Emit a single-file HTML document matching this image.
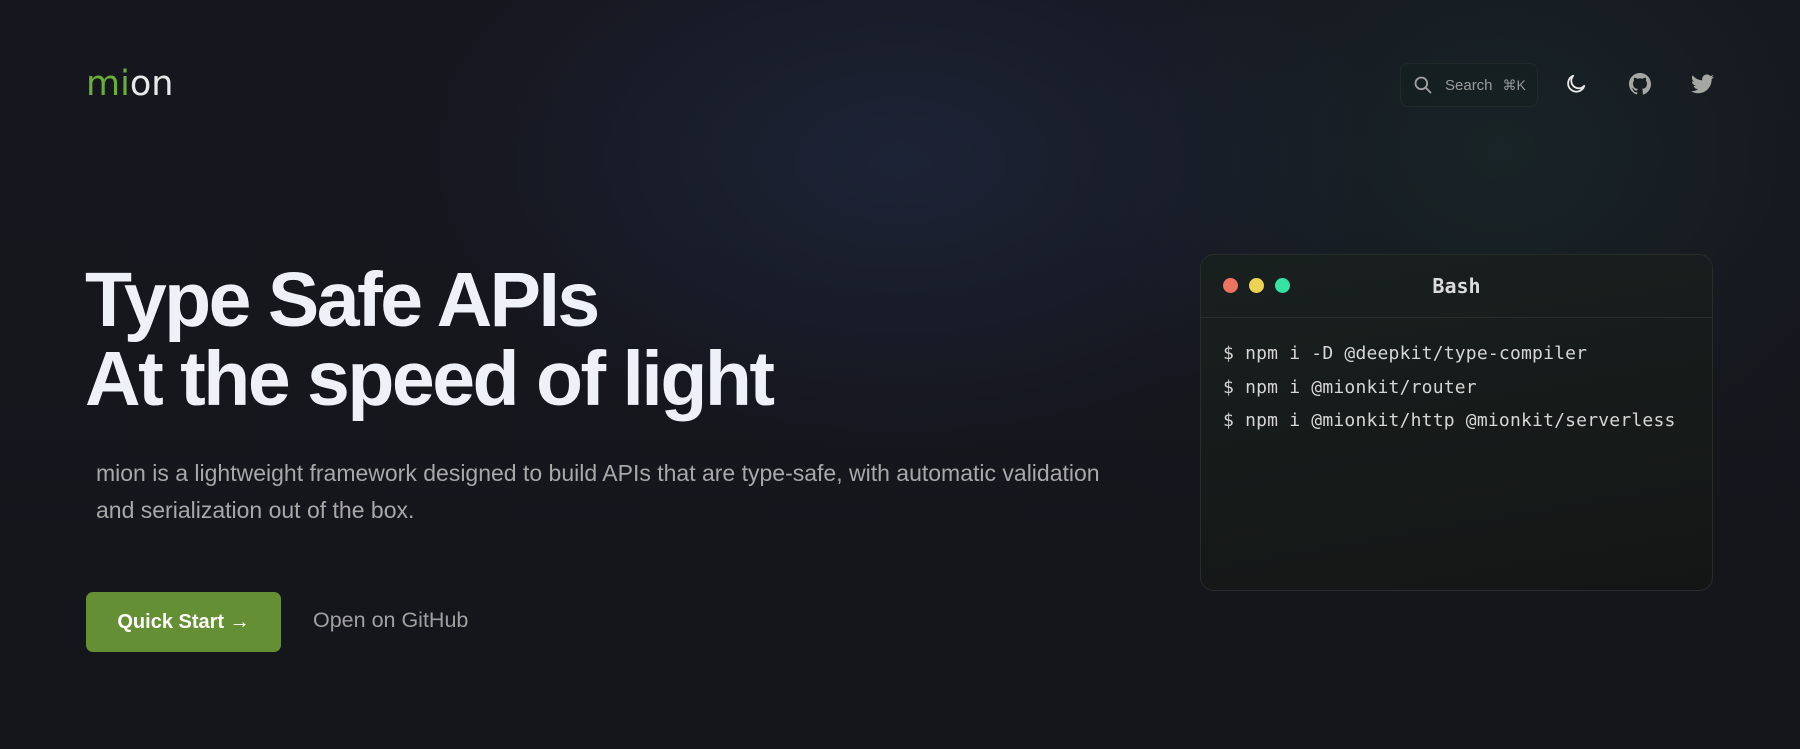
<!DOCTYPE html>
<html><head><meta charset="utf-8"><style>
*{margin:0;padding:0;box-sizing:border-box}
html,body{width:1800px;height:749px;overflow:hidden}
body{font-family:"Liberation Sans",sans-serif;background:#15151c;position:relative;
background:
radial-gradient(ellipse 700px 420px at 900px 160px, rgba(30,40,62,0.75), rgba(30,40,62,0) 70%),
radial-gradient(ellipse 600px 500px at 1500px 150px, rgba(25,45,45,0.6), rgba(25,45,45,0) 70%),
linear-gradient(180deg,#16161e 0%,#15151c 100%);}
.abs{position:absolute}
.logo{left:86px;top:64px;font-size:35px;letter-spacing:0;font-family:"DejaVu Sans","Liberation Sans",sans-serif}
.logo .g{color:#6aad37}.logo .w{color:#e8e8e8}
.search{left:1400px;top:63px;width:138px;height:44px;border-radius:8px;background:rgba(20,30,30,0.5);border:1px solid rgba(40,55,50,0.5);color:#9a9a9a;font-size:15px;display:flex;align-items:center;padding-left:12px}
h1{position:absolute;left:85px;top:261px;font-size:77px;line-height:79px;color:#eef2f8;font-weight:700;letter-spacing:-2.5px}
.p{left:96px;top:455px;width:1046px;font-size:23px;line-height:37px;color:#a8a8a8}
.btn{left:86px;top:592px;width:195px;height:60px;border-radius:7px;background:#658f35;color:#fff;font-weight:700;font-size:20px;display:flex;align-items:center;justify-content:center}
.gh{left:313px;top:608px;font-size:21.5px;color:#a0a0a0}
.term{left:1200px;top:254px;width:513px;height:337px;border-radius:14px;border:1px solid #262d2b;background:linear-gradient(170deg,#18201f 0%,#141615 100%)}
.term .hd{height:63px;border-bottom:1px solid #272e2c;position:relative}
.dot{position:absolute;top:23px;width:15px;height:15px;border-radius:50%}
.bash{position:absolute;left:0;right:0;top:19px;text-align:center;font-family:"DejaVu Sans Mono",monospace;font-weight:700;font-size:20px;color:#dcdcdc}
.code{position:absolute;left:22px;top:82px;font-family:"DejaVu Sans Mono",monospace;font-size:18px;letter-spacing:0.2px;line-height:33.5px;color:#d6d6d6;white-space:pre}
</style></head><body>
<div class="abs logo"><span class="g">mi</span><span class="w">on</span></div>
<div class="abs search"><svg width="20" height="20" viewBox="0 0 24 24" fill="none" stroke="#a0a0a0" stroke-width="2.2" stroke-linecap="round"><circle cx="10" cy="10" r="7"/><path d="M15.5 15.5L21 21"/></svg><span style="margin-left:12px">Search</span><span style="margin-left:10px;font-size:14px">⌘K</span></div>
<svg class="abs" style="left:1565px;top:73px" width="22" height="22" viewBox="0 0 24 24" fill="none" stroke="#e8e8e8" stroke-width="2" stroke-linecap="round" stroke-linejoin="round"><path d="M9 3a9 9 0 1 0 12 11A7 7 0 0 1 9 3z"/></svg>
<svg class="abs" style="left:1629px;top:73px" width="22" height="22" viewBox="0 0 16 16" fill="#a4a7a2"><path d="M8 0C3.580 0 0 3.580 0 8c0 3.540 2.290 6.530 5.470 7.590.4.07.55-.17.55-.38v-1.330c-2.230.48-2.700-1.070-2.700-1.070-.36-.92-.89-1.170-.89-1.170-.73-.5.05-.49.05-.49.8.06 1.230.83 1.230.83.72 1.220 1.870.87 2.330.66.07-.52.28-.87.5-1.070-1.780-.2-3.650-.89-3.650-3.960 0-.87.31-1.590.82-2.150-.08-.2-.36-1.020.08-2.120 0 0 .67-.21 2.200.82a7.6 7.6 0 0 1 4 0c1.530-1.040 2.200-.82 2.200-.82.44 1.100.16 1.920.08 2.120.51.56.82 1.270.82 2.150 0 3.070-1.870 3.750-3.650 3.950.29.25.54.73.54 1.480v2.200c0 .21.15.46.55.38A8 8 0 0 0 16 8c0-4.420-3.580-8-8-8z"/></svg>
<svg class="abs" style="left:1691px;top:74px" width="23" height="20" viewBox="0 0 24 20" fill="#a4a7a2"><path d="M24 2.4a9.8 9.8 0 0 1-2.8.8A4.9 4.9 0 0 0 23.3.5a9.9 9.9 0 0 1-3.1 1.2A4.9 4.9 0 0 0 11.8 6.2 14 14 0 0 1 1.7 1 4.9 4.9 0 0 0 3.2 7.6a4.9 4.9 0 0 1-2.2-.6v.1a4.9 4.9 0 0 0 3.9 4.8 4.9 4.9 0 0 1-2.2.1 4.9 4.9 0 0 0 4.6 3.4A9.9 9.9 0 0 1 0 17.4 14 14 0 0 0 7.5 19.6c9.1 0 14-7.5 14-14v-.6A10 10 0 0 0 24 2.4z"/></svg>
<h1>Type Safe APIs<br>At the speed of light</h1>
<div class="abs p">mion is a lightweight framework designed to build APIs that are type-safe, with automatic validation and serialization out of the box.</div>
<div class="abs btn">Quick Start →</div>
<div class="abs gh">Open on GitHub</div>
<div class="abs term"><div class="hd"><span class="dot" style="left:22px;background:#ee735f"></span><span class="dot" style="left:48px;background:#ecd452"></span><span class="dot" style="left:74px;background:#34e2a4"></span><div class="bash">Bash</div></div>
<div class="code">$ npm i -D @deepkit/type-compiler
$ npm i @mionkit/router
$ npm i @mionkit/http @mionkit/serverless</div></div>
</body></html>
